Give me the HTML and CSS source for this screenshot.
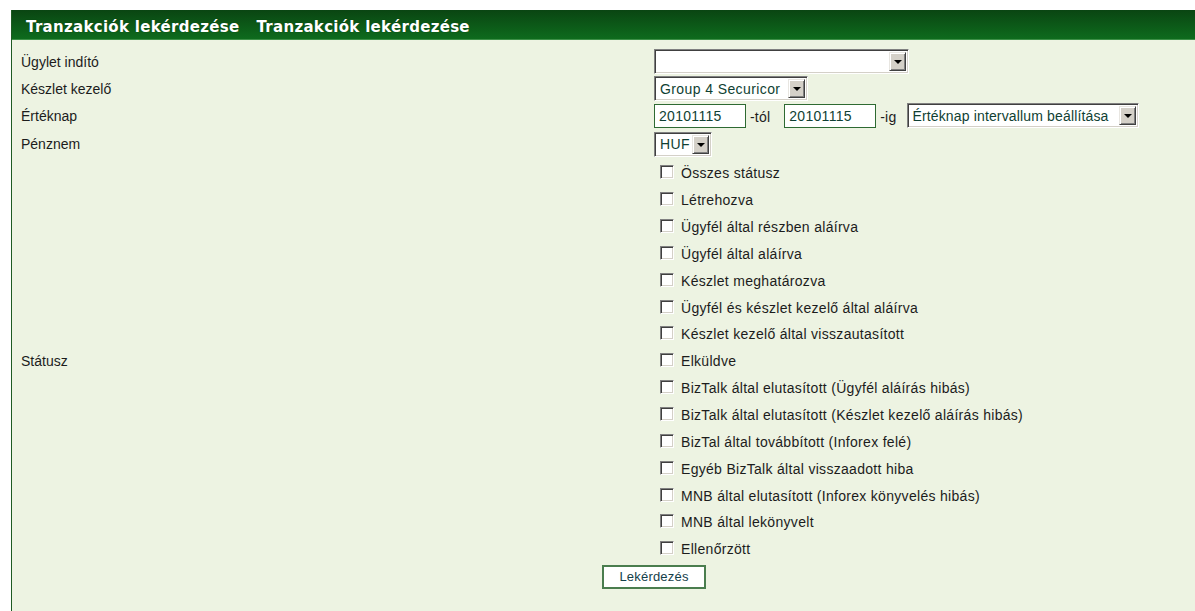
FILE: index.html
```html
<!DOCTYPE html>
<html lang="hu">
<head>
<meta charset="utf-8">
<title>Tranzakciók lekérdezése</title>
<link rel="stylesheet" href="styles.css">
</head>
<body>
<div class="panel">
  <div class="title">
    <span>Tranzakciók lekérdezése</span>
    <span>Tranzakciók lekérdezése</span>
  </div>
  <form class="form">
    <div class="row r1">
      <div class="label">Ügylet indító</div>
      <div class="field">
        <div class="combo w-init"><span class="combo-value"></span><span class="combo-btn"></span></div>
      </div>
    </div>
    <div class="row r2">
      <div class="label">Készlet kezelő</div>
      <div class="field">
        <div class="combo w-keeper"><span class="combo-value">Group 4 Securicor</span><span class="combo-btn"></span></div>
      </div>
    </div>
    <div class="row r3">
      <div class="label">Értéknap</div>
      <div class="field dates">
        <input class="date" type="text" value="20101115">
        <span class="suffix from">-tól</span>
        <input class="date" type="text" value="20101115">
        <span class="suffix to">-ig</span>
        <div class="combo w-range"><span class="combo-value">Értéknap intervallum beállítása</span><span class="combo-btn"></span></div>
      </div>
    </div>
    <div class="row r4">
      <div class="label">Pénznem</div>
      <div class="field">
        <div class="combo w-cur"><span class="combo-value">HUF</span><span class="combo-btn"></span></div>
      </div>
    </div>
    <div class="row status">
      <div class="label">Státusz</div>
      <div class="field checks">
        <label class="check"><input type="checkbox"><span>Összes státusz</span></label>
        <label class="check"><input type="checkbox"><span>Létrehozva</span></label>
        <label class="check"><input type="checkbox"><span>Ügyfél által részben aláírva</span></label>
        <label class="check"><input type="checkbox"><span>Ügyfél által aláírva</span></label>
        <label class="check"><input type="checkbox"><span>Készlet meghatározva</span></label>
        <label class="check"><input type="checkbox"><span>Ügyfél és készlet kezelő által aláírva</span></label>
        <label class="check"><input type="checkbox"><span>Készlet kezelő által visszautasított</span></label>
        <label class="check"><input type="checkbox"><span>Elküldve</span></label>
        <label class="check"><input type="checkbox"><span>BizTalk által elutasított (Ügyfél aláírás hibás)</span></label>
        <label class="check"><input type="checkbox"><span>BizTalk által elutasított (Készlet kezelő aláírás hibás)</span></label>
        <label class="check"><input type="checkbox"><span>BizTal által továbbított (Inforex felé)</span></label>
        <label class="check"><input type="checkbox"><span>Egyéb BizTalk által visszaadott hiba</span></label>
        <label class="check"><input type="checkbox"><span>MNB által elutasított (Inforex könyvelés hibás)</span></label>
        <label class="check"><input type="checkbox"><span>MNB által lekönyvelt</span></label>
        <label class="check"><input type="checkbox"><span>Ellenőrzött</span></label>
      </div>
    </div>
    <div class="actions">
      <button type="button" class="submit">Lekérdezés</button>
    </div>
  </form>
</div>
</body>
</html>
```
FILE: styles.css
```css
html, body {
  margin: 0;
  padding: 0;
  background: #ffffff;
}

body {
  font-family: "Liberation Sans", Arial, sans-serif;
  font-size: 14px;
  color: #1c1c1c;
}

.panel {
  margin: 10px 0 0 11px;
  min-height: 601px;
  background: #edf3e2;
  border-left: 1px solid #1e5a22;
  box-sizing: border-box;
}

/* title bar */
.title {
  height: 30px;
  box-sizing: border-box;
  display: flex;
  align-items: center;
  gap: 17px;
  padding: 4px 0 0 14px;
  background: linear-gradient(#0a4512, #0e6b1d);
  border-bottom: 1px solid #3d8f47;
  font-family: "DejaVu Sans", Verdana, sans-serif;
  font-weight: bold;
  font-size: 15px;
  letter-spacing: 0.3px;
  color: #ffffff;
  text-shadow: 0 0 1px rgba(0, 30, 0, 0.6);
}

/* form grid */
.form {
  padding-top: 8px;
  margin: 0;
}

.row {
  display: grid;
  grid-template-columns: 642px 1fr;
  align-items: center;
}

.r1, .r2, .r3 { height: 27px; }
.r4 { height: 30px; }

.label {
  padding-left: 9px;
}

.field {
  display: flex;
  align-items: center;
}

/* sunken combo box */
.combo {
  height: 25px;
  box-sizing: border-box;
  display: flex;
  align-items: stretch;
  background: #ffffff;
  border: 1px solid;
  border-color: #808080 #ffffff #ffffff #808080;
  box-shadow: inset 1px 1px 0 #404040, inset -1px -1px 0 #d4d0c8;
  padding: 2px;
}

.combo-value {
  flex: 1;
  display: flex;
  align-items: center;
  padding-left: 3px;
  letter-spacing: 0.4px;
  color: #103f33;
  white-space: nowrap;
  overflow: hidden;
}

.combo-btn {
  width: 17px;
  flex: none;
  box-sizing: border-box;
  background: #d4d0c8;
  border: 1px solid;
  border-color: #e8e6e1 #404040 #404040 #e8e6e1;
  box-shadow: inset 1px 1px 0 #ffffff, inset -1px -1px 0 #808080;
  display: flex;
  align-items: center;
  justify-content: center;
}

.combo-btn::after {
  content: "";
  border-left: 4px solid transparent;
  border-right: 4px solid transparent;
  border-top: 4px solid #000000;
  margin-top: 1px;
}

.w-init { width: 255px; }
.w-keeper { width: 154px; }
.w-range { width: 232px; }
.w-range .combo-value { letter-spacing: 0.15px; padding-left: 2px; }
.w-cur { width: 58px; }

/* value date inputs */
.date {
  width: 92px;
  height: 24px;
  box-sizing: border-box;
  border: 1px solid #2e6a32;
  background: #ffffff;
  font-family: inherit;
  font-size: 14px;
  letter-spacing: 0.3px;
  color: #103f33;
  padding: 0 0 0 4px;
  margin: 0;
}

.suffix {
  color: #1c1c1c;
  letter-spacing: 0.2px;
}

.suffix.from { margin: 2px 14px 0 4px; }
.suffix.to { margin: 2px 11px 0 4px; }

/* status checkboxes */
.checks {
  flex-direction: column;
  align-items: flex-start;
  padding: 1px 0 0 6px;
}

.check {
  display: flex;
  align-items: center;
  height: 26.85px;
  gap: 7px;
  letter-spacing: 0.3px;
}

.check input {
  appearance: none;
  -webkit-appearance: none;
  width: 14px;
  height: 14px;
  margin: 0 0 2px 0;
  box-sizing: border-box;
  background: #ffffff;
  border: 1px solid;
  border-color: #808080 #ffffff #ffffff #808080;
  box-shadow: inset 1px 1px 0 #404040, inset -1px -1px 0 #d4d0c8;
}

/* submit */
.actions {
  padding: 2px 0 0 590px;
}

.submit {
  width: 104px;
  height: 24px;
  box-sizing: border-box;
  background: #ffffff;
  border: 2px solid #4a7d4e;
  font-family: inherit;
  font-size: 13px;
  letter-spacing: 0.2px;
  color: #14404a;
  padding: 0;
  cursor: pointer;
}
```
